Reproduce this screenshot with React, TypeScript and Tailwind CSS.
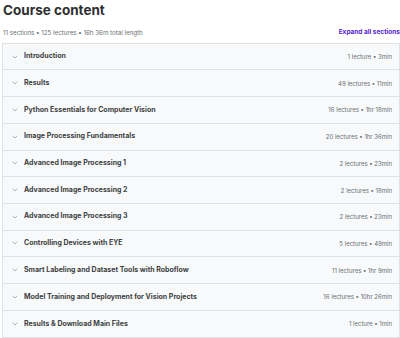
import { ChevronDown } from "lucide-react";

const sections = [
  { title: "Introduction", meta: "1 lecture • 3min" },
  { title: "Results", meta: "49 lectures • 11min" },
  { title: "Python Essentials for Computer Vision", meta: "16 lectures • 1hr 18min" },
  { title: "Image Processing Fundamentals", meta: "20 lectures • 1hr 36min" },
  { title: "Advanced Image Processing 1", meta: "2 lectures • 23min" },
  { title: "Advanced Image Processing 2", meta: "2 lectures • 18min" },
  { title: "Advanced Image Processing 3", meta: "2 lectures • 23min" },
  { title: "Controlling Devices with EYE", meta: "5 lectures • 49min" },
  { title: "Smart Labeling and Dataset Tools with Roboflow", meta: "11 lectures • 1hr 9min" },
  { title: "Model Training and Deployment for Vision Projects", meta: "16 lectures • 10hr 26min" },
  { title: "Results & Download Main Files", meta: "1 lecture • 1min" },
];

export default function App() {
  return (
    <div className="w-[400px] h-[338px] overflow-hidden bg-white pl-[2px] font-['Inter',sans-serif] text-[#2d2f31]">
      <h2 className="pl-[1px] pt-[2px] text-[13.5px] font-bold leading-[17px]">Course content</h2>
      <div className="mt-[9px] flex items-end justify-between pl-[1px]">
        <span className="text-[6.2px] text-[#6a6f73]">11 sections • 125 lectures • 16h 36m total length</span>
        <button className="text-[6.5px] font-bold text-[#5624d0]">Expand all sections</button>
      </div>
      <div className="mt-[5px] border border-[#dfe3e6]">
        {sections.map((s) => (
          <div
            key={s.title}
            className="flex h-[26.7px] items-center justify-between border-b border-[#dfe3e6] bg-[#f7f9fa] pl-[8px] pr-[7px] last:border-b-0"
          >
            <div className="flex items-center gap-[5px]">
              <ChevronDown size={8} strokeWidth={1.5} className="text-[#6a6f73]" />
              <span className="text-[7px] font-bold text-[#3d3f41]">{s.title}</span>
            </div>
            <span className="text-[6px] text-[#6a6f73]">{s.meta}</span>
          </div>
        ))}
      </div>
    </div>
  );
}
